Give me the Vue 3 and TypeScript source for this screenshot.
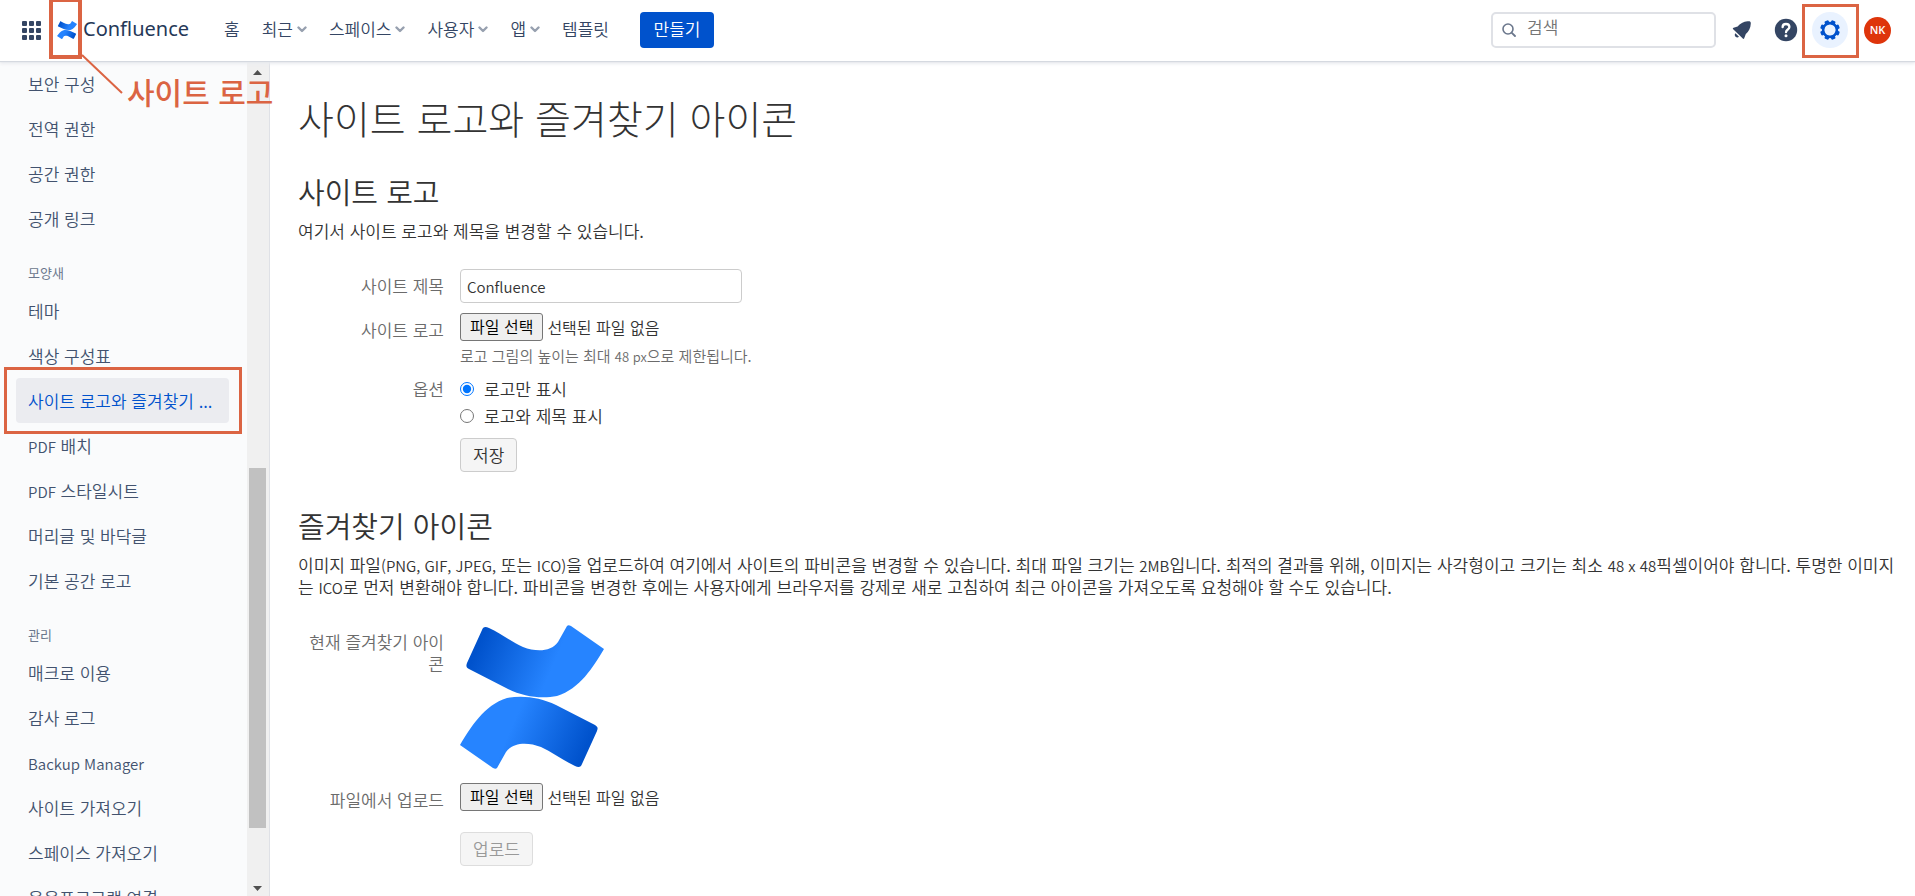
<script setup lang="ts">
import { ref } from 'vue'

interface MenuItem { label: string; dropdown: boolean }
interface SideGroup { title: string; items: string[] }
interface Run { text: string; latin: boolean }

const menu: MenuItem[] = [
  { label: '홈', dropdown: false },
  { label: '최근', dropdown: true },
  { label: '스페이스', dropdown: true },
  { label: '사용자', dropdown: true },
  { label: '앱', dropdown: true },
  { label: '템플릿', dropdown: false },
]

const current = '사이트 로고와 즐겨찾기 ...'
const groups: SideGroup[] = [
  { title: '', items: ['보안 구성', '전역 권한', '공간 권한', '공개 링크'] },
  {
    title: '모양새',
    items: ['테마', '색상 구성표', current, 'PDF 배치', 'PDF 스타일시트', '머리글 및 바닥글', '기본 공간 로고'],
  },
  {
    title: '관리',
    items: ['매크로 이용', '감사 로그', 'Backup Manager', '사이트 가져오기', '스페이스 가져오기', '응용프로그램 연결'],
  },
]

const hint = '로고 그림의 높이는 최대 48 px으로 제한됩니다.'
const about =
  '이미지 파일(PNG, GIF, JPEG, 또는 ICO)을 업로드하여 여기에서 사이트의 파비콘을 변경할 수 있습니다. 최대 파일 크기는 2MB입니다. 최적의 결과를 위해, 이미지는 사각형이고 크기는 최소 48 x 48픽셀이어야 합니다. 투명한 이미지는 ICO로 먼저 변환해야 합니다. 파비콘을 변경한 후에는 사용자에게 브라우저를 강제로 새로 고침하여 최근 아이콘을 가져오도록 요청해야 할 수도 있습니다.'

// Splits a text so that Latin words and numbers can be set a little smaller than Hangul.
const runs = (s: string): Run[] =>
  s
    .split(/([(]?[A-Za-z0-9]+(?:,? [A-Za-z0-9]+)*[,)]?)/)
    .filter((t) => t !== '')
    .map((t) => ({ text: t, latin: /[A-Za-z0-9]/.test(t) }))

const siteTitle = ref('Confluence')
const display = ref('logo')
const dots = [0, 1, 2].flatMap((r) => [0, 1, 2].map((c) => ({ x: c * 7, y: r * 7 })))
const teeth = [0, 45, 90, 135, 180, 225, 270, 315]
</script>

<template>
  <div class="page" lang="ko">
    <svg class="defs" aria-hidden="true">
      <defs>
        <linearGradient id="ribbon" gradientUnits="userSpaceOnUse" x1="18" y1="22" x2="88" y2="52">
          <stop offset="0" stop-color="#0052cc" />
          <stop offset="1" stop-color="#2684ff" />
        </linearGradient>
        <path
          id="wave"
          d="M29 3C25 1 23 2 22 5L7 38C6 41 6 42 9 44L48 64C64 72 82 74 97 71C120 64 133 42 144 24L111 1C109 0 108 0 107 1L98 17C91 27 76 27 63 22C52 17 40 8 29 3Z"
        />
        <symbol id="brand" viewBox="0 0 144 144">
          <use href="#wave" fill="url(#ribbon)" />
          <use href="#wave" fill="url(#ribbon)" transform="rotate(180 72 72)" />
        </symbol>
      </defs>
    </svg>

    <header class="topbar">
      <button class="switcher" aria-label="앱 전환">
        <svg width="19" height="19" viewBox="0 0 19 19">
          <rect v-for="(d, i) in dots" :key="i" :x="d.x" :y="d.y" width="5" height="5" rx="1" fill="#344563" />
        </svg>
      </button>
      <a class="brand" href="#">
        <svg width="20" height="18" viewBox="0 0 144 144" preserveAspectRatio="none"><use href="#brand" /></svg>
        <span class="brand-name">Confluence</span>
      </a>
      <nav class="menu">
        <a v-for="m in menu" :key="m.label" href="#">
          {{ m.label }}
          <svg v-if="m.dropdown" width="10" height="7" viewBox="0 0 10 7">
            <path d="M1.5 1.5L5 5L8.5 1.5" fill="none" stroke="#97a0af" stroke-width="2.4" stroke-linecap="round" stroke-linejoin="round" />
          </svg>
        </a>
      </nav>
      <button class="create">만들기</button>

      <div class="tools">
        <label class="search">
          <svg width="14" height="14" viewBox="0 0 14 14">
            <circle cx="6" cy="6" r="5" fill="none" stroke="#6b778c" stroke-width="1.6" />
            <path d="M9.8 9.8L13 13" stroke="#6b778c" stroke-width="1.8" stroke-linecap="round" />
          </svg>
          <input type="text" placeholder="검색" aria-label="검색" />
        </label>
        <button class="icon" aria-label="알림">
          <svg width="20" height="20" viewBox="0 0 20 20" fill="#344563">
            <path d="M1.2 9.2C0.6 8.6 0.8 8 1.6 7.8L5.6 6.6C8 3.6 11.4 1.6 15.6 1.3C17.6 1 19 1.5 18.8 3.4C18.6 8 16.8 11.4 13.8 14L12.2 18.2C11.9 19 11.3 19.1 10.8 18.6Z" />
            <path d="M3.4 13.2L7 16.8C5.9 17.7 4.5 17.6 3.6 16.7C2.6 15.7 2.5 14.3 3.4 13.2Z" />
          </svg>
        </button>
        <button class="icon" aria-label="도움말">
          <svg width="24" height="24" viewBox="0 0 24 24">
            <circle cx="12" cy="12" r="11.2" fill="#344563" />
            <path d="M8.6 9.2C8.6 7.2 10 6 12 6S15.4 7.2 15.4 9.1C15.4 11.6 12 11.4 12 14.2" fill="none" stroke="#fff" stroke-width="2.3" stroke-linecap="round" />
            <circle cx="12" cy="17.8" r="1.5" fill="#fff" />
          </svg>
        </button>
        <button class="icon gear" aria-label="설정">
          <svg width="22" height="22" viewBox="-11 -11 22 22">
            <rect v-for="a in teeth" :key="a" x="-2.2" y="-9.9" width="4.4" height="4" rx="1.2" fill="#0052cc" :transform="`rotate(${a + 22.5})`" />
            <circle r="6.9" fill="none" stroke="#0052cc" stroke-width="2.6" />
          </svg>
        </button>
        <button class="avatar">NK</button>
      </div>
    </header>

    <div class="body">
      <aside class="side">
        <nav class="side-nav">
          <section v-for="g in groups" :key="g.title">
            <h3 v-if="g.title">{{ g.title }}</h3>
            <a v-for="s in g.items" :key="s" href="#" :class="{ active: s === current }"><template v-for="(r, i) in runs(s)" :key="i"><span v-if="r.latin" class="latin">{{ r.text }}</span><template v-else>{{ r.text }}</template></template></a>
          </section>
        </nav>
        <div class="scroll">
          <svg width="9" height="5" viewBox="0 0 9 5"><path d="M0 5L4.5 0L9 5Z" fill="#505050" /></svg>
          <div class="track"><div class="thumb"></div></div>
          <svg width="9" height="5" viewBox="0 0 9 5"><path d="M0 0L4.5 5L9 0Z" fill="#505050" /></svg>
        </div>
      </aside>

      <main class="content">
        <h1>사이트 로고와 즐겨찾기 아이콘</h1>

        <h2>사이트 로고</h2>
        <p>여기서 사이트 로고와 제목을 변경할 수 있습니다.</p>
        <form class="logo-form" @submit.prevent>
          <div class="row">
            <label class="name" for="site-title">사이트 제목</label>
            <input id="site-title" v-model="siteTitle" class="text" type="text" />
          </div>
          <div class="row">
            <label class="name" for="site-logo">사이트 로고</label>
            <div class="field">
              <div class="file">
                <input id="site-logo" type="file" />
                <label class="pick" for="site-logo">파일 선택</label>
                <span>선택된 파일 없음</span>
              </div>
              <div class="hint"><template v-for="(r, i) in runs(hint)" :key="i"><span v-if="r.latin" class="latin">{{ r.text }}</span><template v-else>{{ r.text }}</template></template></div>
            </div>
          </div>
          <div class="row" role="radiogroup" aria-labelledby="options">
            <span id="options" class="name">옵션</span>
            <div class="field">
              <label class="radio"><input v-model="display" type="radio" name="display" value="logo" />로고만 표시</label>
              <label class="radio"><input v-model="display" type="radio" name="display" value="both" />로고와 제목 표시</label>
            </div>
          </div>
          <div class="actions"><button class="btn" type="submit">저장</button></div>
        </form>

        <h2>즐겨찾기 아이콘</h2>
        <p><template v-for="(r, i) in runs(about)" :key="i"><span v-if="r.latin" class="latin">{{ r.text }}</span><template v-else>{{ r.text }}</template></template></p>
        <form class="icon-form" @submit.prevent>
          <div class="row">
            <span class="name">현재 즐겨찾기 아이콘</span>
            <svg class="favicon" width="144" height="144"><use href="#brand" /></svg>
          </div>
          <div class="row">
            <label class="name" for="icon-file">파일에서 업로드</label>
            <div class="file">
              <input id="icon-file" type="file" />
              <label class="pick" for="icon-file">파일 선택</label>
              <span>선택된 파일 없음</span>
            </div>
          </div>
          <div class="actions"><button class="btn" type="submit" disabled>업로드</button></div>
        </form>
      </main>
    </div>

    <div class="mark-box on-logo"></div>
    <svg class="leader" width="42" height="40" viewBox="0 0 42 40"><path d="M1 1L41 39" stroke="#db6443" stroke-width="2" /></svg>
    <div class="callout">사이트 로고</div>
    <div class="mark-box on-item"></div>
    <div class="mark-box on-gear"></div>
  </div>
</template>

<style>
body { margin: 0; }
</style>

<style scoped>
.page {
  position: relative;
  display: flex;
  flex-direction: column;
  height: 100vh;
  overflow: hidden;
  background: #fff;
  color: #333;
  font: 17px/22px "Noto Sans CJK KR", sans-serif;
  font-weight: 350;
}
.page * { box-sizing: border-box; }
.defs { position: absolute; width: 0; height: 0; }
button, input { font: inherit; color: inherit; }
button { border: 0; padding: 0; background: none; display: flex; align-items: center; justify-content: center; }
a { color: inherit; text-decoration: none; }
svg { display: block; flex: none; }
.latin { font-size: 15px; line-height: 20px; }

.topbar {
  position: relative;
  z-index: 1;
  display: flex;
  align-items: center;
  height: 61px;
  flex: none;
  padding: 0 24px 1px 22px;
  background: #fff;
  box-shadow: 0 1px 1px #d5d9e0, 0 3px 3px #ebecf0;
  color: #344563;
}
.brand { display: flex; align-items: center; gap: 6px; margin-left: 16px; }
.brand-name { width: 108px; padding-bottom: 2px; font: 20px/28px "Noto Sans", sans-serif; color: #253858; }
.menu { display: flex; gap: 22px; margin-left: 33px; padding-bottom: 2px; }
.menu a { display: flex; align-items: center; gap: 4px; }
.create { width: 74px; height: 36px; margin-left: 31px; padding-bottom: 2px; border-radius: 4px; background: #0052cc; color: #fff; }
.tools { display: flex; align-items: center; margin-left: auto; }
.search {
  display: flex;
  align-items: center;
  gap: 11px;
  width: 225px;
  height: 36px;
  margin-right: 8px;
  padding: 0 9px;
  border: 2px solid #dfe1e6;
  border-radius: 5px;
}
.search input { width: 100%; min-width: 0; height: 32px; padding: 0 0 8px; border: 0; outline: 0; background: none; }
.search input::placeholder { color: #757575; opacity: 1; }
.icon { width: 36px; height: 36px; margin-right: 8px; border-radius: 50%; }
.gear { margin-right: 16px; background: #e9f2ff; }
.avatar { width: 27px; height: 27px; border-radius: 50%; background: #de350b; color: #fff; font: 600 11px/14px "Open Sans", sans-serif; }

.body { display: flex; flex: 1; min-height: 0; }
.side { display: flex; flex: none; width: 270px; border-right: 1px solid #dfe1e6; background: #fafbfc; }
.side-nav { flex: 1; min-width: 0; padding: 0 18px 0 16px; overflow: hidden; color: #42526e; }
.side-nav a { display: block; height: 45px; padding: 0 12px; border-radius: 4px; line-height: 45px; white-space: nowrap; }
.side-nav a.active { background: #ebecf0; color: #0052cc; }
.side-nav h3 { margin: 0; padding: 21px 12px 4px; color: #6b778c; font-size: 13px; font-weight: 400; line-height: 22px; }
.scroll { display: flex; flex-direction: column; align-items: center; width: 22px; padding: 9px 2px 5px 0; background: #f0f0f0; }
.track { flex: 1; display: flex; flex-direction: column; width: 17px; padding: 393px 0 58px; }
.thumb { flex: 1; background: #c1c1c1; }

.content { flex: 1; min-width: 0; padding: 32px 16px 0 28px; }
h1 { margin: 0; font-size: 39px; font-weight: 300; line-height: 48px; }
h2 { margin: 33px 0 0; font-size: 29px; font-weight: 350; line-height: 34px; }
p { margin: 12px 0 0; word-break: break-all; }
.row { display: flex; align-items: flex-start; gap: 16px; }
.name { flex: none; width: 146px; padding-top: 6px; color: #6b6b6b; text-align: right; word-break: break-all; }
.text { width: 282px; height: 34px; padding: 0 6px; border: 1px solid #ccc; border-radius: 4px; outline: 0; background: #fff; font-size: 15px; }
.logo-form { display: flex; flex-direction: column; margin-top: 27px; }
.logo-form .row:nth-child(2) { margin-top: 10px; }
.file { position: relative; display: flex; align-items: center; gap: 4px; font-size: 16px; }
.file input { position: absolute; width: 1px; height: 1px; opacity: 0; }
.pick { padding: 0 9px 2px; border: 1px solid #767676; border-radius: 3px; background: #efefef; color: #000; line-height: 24px; }
.hint { margin-top: 4px; color: #6b6b6b; font-size: 15px; }
.hint .latin { font-size: 13px; }
.logo-form .row:nth-child(3) { margin-top: 8px; }
.radio { display: flex; align-items: center; gap: 10px; height: 27px; }
.logo-form .row:nth-child(3) .name { padding-top: 3px; }
.radio input { width: 14px; height: 14px; margin: 0; }
.actions { margin-left: 162px; }
.btn { padding: 5px 12px; border: 1px solid #ccc; border-radius: 4px; background: #f5f5f5; }
.btn:disabled { border-color: #ddd; color: #999; }
.logo-form .actions { margin-top: 9px; }
.logo-form + h2 { margin-top: 36px; }
.icon-form { margin-top: 27px; }
.favicon { margin-bottom: 14px; }
.icon-form .actions { margin-top: 21px; }

.mark-box { position: absolute; border: 3px solid #db6443; pointer-events: none; z-index: 2; }
.on-logo { left: 49px; top: -2px; width: 33px; height: 61px; border-width: 4px; }
.on-item { left: 4px; top: 367px; width: 238px; height: 67px; }
.on-gear { left: 1802px; top: 4px; width: 57px; height: 54px; }
.leader { position: absolute; left: 81px; top: 54px; z-index: 2; }
.callout { position: absolute; left: 127px; top: 71px; z-index: 2; color: #db6443; font-size: 30px; font-weight: 500; line-height: 40px; white-space: nowrap; }
</style>
